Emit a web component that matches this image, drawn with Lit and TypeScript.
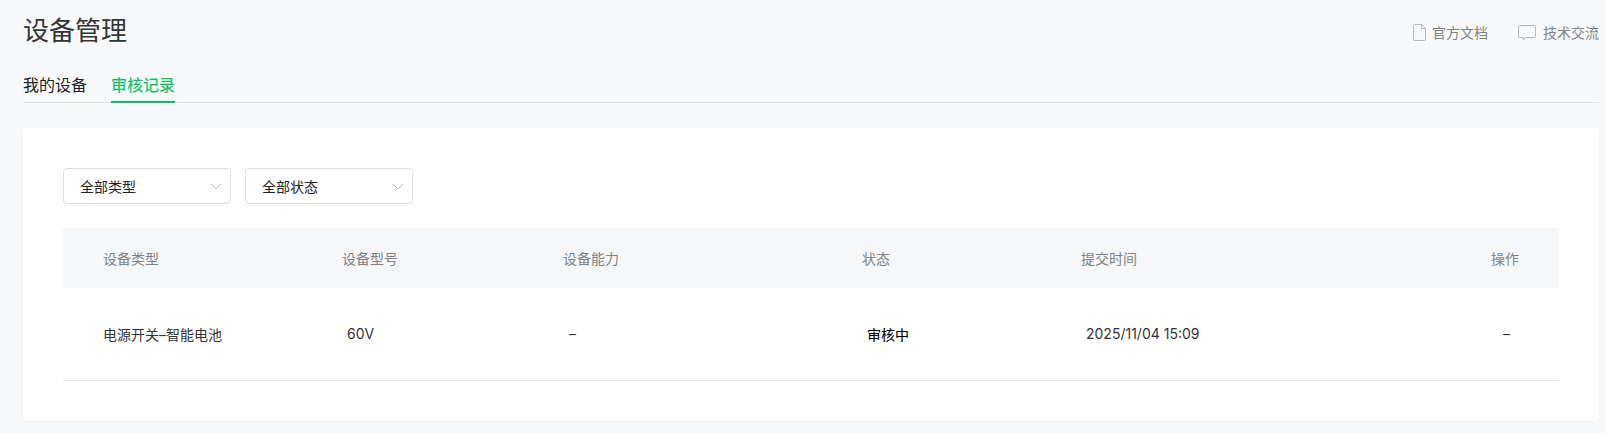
import { LitElement, html, css, svg } from "lit";
import { customElement } from "lit/decorators.js";

const chevron = html`<svg class="chev" width="12" height="7" viewBox="0 0 12 7" fill="none"><path d="M1 1l5 5 5-5" stroke="#b4b8bd" stroke-width="1"/></svg>`;
const doc = svg`<path d="M.5 1.5A1 1 0 0 1 1.5.5H8.5L12.5 4.5V15.5A1 1 0 0 1 11.5 16.5H1.5A1 1 0 0 1 .5 15.5Z M8.5 .5V4.5H12.5" fill="none" stroke="#b3b5b8" stroke-width="1"/>`;
const chat = svg`<path d="M1.5.5H16.5A1 1 0 0 1 17.5 1.5V11.5A1 1 0 0 1 16.5 12.5H7.5L5.5 15V12.5H1.5A1 1 0 0 1 .5 11.5V1.5A1 1 0 0 1 1.5.5Z" fill="none" stroke="#b3b5b8" stroke-width="1"/>`;

@customElement("app-root")
export class AppRoot extends LitElement {
  static styles = css`
    :host {
      display: block;
      min-height: 433px;
      box-sizing: border-box;
      padding: 0 6px 12px 23px;
      background: #f8f9fb;
      font-family: Inter, "Noto Sans CJK SC", sans-serif;
      font-size: 14px;
      color: #333;
    }
    .top { display: flex; justify-content: space-between; align-items: center; height: 62px; }
    h1 { margin: 0; font-size: 26px; font-weight: 400; color: #333; line-height: 36px; }
    .links { display: flex; gap: 30px; align-items: center; color: #7f8285; font-size: 14px; margin-top: 3px; }
    .link { display: flex; align-items: center; gap: 6px; line-height: 20px; }
    .link.wide { gap: 7px; }
    .link svg { display: block; }
    .tabs { display: flex; gap: 24px; height: 41px; box-sizing: border-box; border-bottom: 1px solid #e0e2e5; }
    .tab { font-size: 16px; line-height: 24px; padding-top: 11px; height: 41px; box-sizing: border-box; color: #222; }
    .tab.on { color: #07c160; -webkit-text-stroke: 0.15px #07c160; border-bottom: 2px solid #07c160; }
    .card {
      margin-top: 25px; padding: 40px; background: #fff; border-radius: 4px;
      box-shadow: 0 1px 4px rgba(0,0,0,.03);
    }
    .filters { display: flex; gap: 14px; }
    .select {
      width: 168px; height: 36px; box-sizing: border-box; border: 1px solid #dcdfe2; border-radius: 4px;
      display: flex; align-items: center; justify-content: space-between; padding: 0 8px 0 16px; color: #222;
    }
    .table { margin-top: 24px; }
    .row { display: grid; grid-template-columns: 239px 221px 299px 219px 1fr 68px; padding: 0 0 0 40px; align-items: center; }
    .head { height: 60px; background: #f5f7f8; color: #7f8285; }
    .body { height: 93px; box-sizing: border-box; border-bottom: 1px solid #e4e6ea; color: #333; padding-bottom: 1px; }
    .body > div:not(:first-child) { padding-left: 5px; }
    .body > div.status { color: #000; -webkit-text-stroke: 0.1px #000; }
    .body > div.dash { padding-left: 6px; }
    .body > div.op { padding-left: 12px; }
  `;

  render() {
    return html`
      <div class="top">
        <h1>设备管理</h1>
        <div class="links">
          <span class="link"><svg width="13" height="17" viewBox="0 0 13 17">${doc}</svg>官方文档</span>
          <span class="link wide"><svg width="18" height="16" viewBox="0 0 18 16">${chat}</svg>技术交流</span>
        </div>
      </div>
      <div class="tabs">
        <div class="tab">我的设备</div>
        <div class="tab on">审核记录</div>
      </div>
      <div class="card">
        <div class="filters">
          <div class="select">全部类型${chevron}</div>
          <div class="select">全部状态${chevron}</div>
        </div>
        <div class="table">
          <div class="row head">
            <div>设备类型</div><div>设备型号</div><div>设备能力</div><div>状态</div><div>提交时间</div><div>操作</div>
          </div>
          <div class="row body">
            <div>电源开关–智能电池</div><div>60V</div><div class="dash">–</div><div class="status">审核中</div><div>2025/11/04 15:09</div><div class="op">–</div>
          </div>
        </div>
      </div>
    `;
  }
}
